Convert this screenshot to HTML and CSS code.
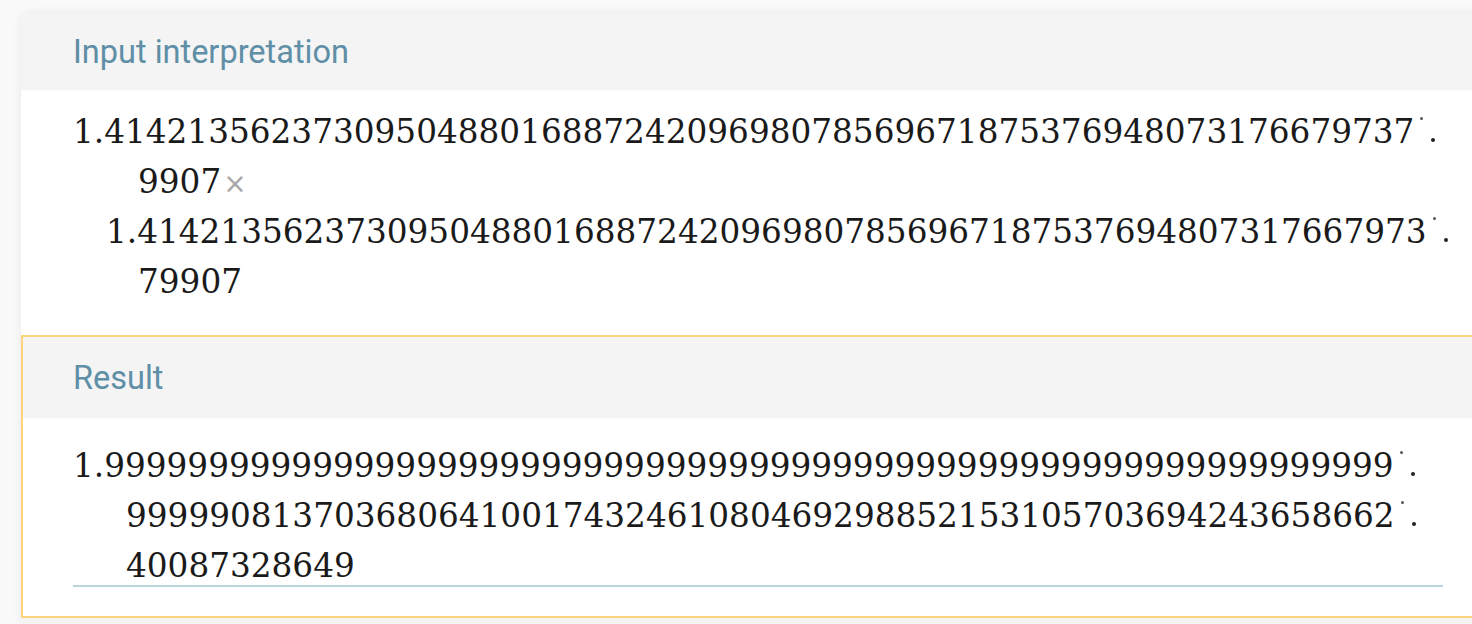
FILE: index.html
```html
<!DOCTYPE html>
<html lang="en">
<head>
<meta charset="utf-8">
<title>Input interpretation</title>
<link rel="stylesheet" href="styles.css">
</head>
<body>
<div class="card">
  <section class="pod">
    <header class="pod-head"><h2 class="pod-title">Input interpretation</h2></header>
    <div class="pod-body pod-body-input">
      <div class="ln">1.414213562373095048801688724209698078569671875376948073176679737<span class="brk"><span class="dot-up"></span><span class="dot-dn"></span></span></div>
      <div class="ln ind2">9907<span class="times">×</span></div>
      <div class="ln ind1">1.41421356237309504880168872420969807856967187537694807317667973<span class="brk"><span class="dot-up"></span><span class="dot-dn"></span></span></div>
      <div class="ln ind2">79907</div>
    </div>
  </section>
  <section class="pod pod-result">
    <header class="pod-head pod-head-result"><h2 class="pod-title">Result</h2></header>
    <div class="pod-body pod-body-result">
      <div class="result-lines">
        <div class="ln">1.99999999999999999999999999999999999999999999999999999999999999<span class="brk"><span class="dot-up"></span><span class="dot-dn"></span></span></div>
        <div class="ln ind3">9999908137036806410017432461080469298852153105703694243658662<span class="brk"><span class="dot-up"></span><span class="dot-dn"></span></span></div>
        <div class="ln ind3">40087328649</div>
      </div>
    </div>
  </section>
  <div class="pod-next"></div>
</div>
</body>
</html>
```

FILE: styles.css
```css
html, body {
  margin: 0;
  padding: 0;
  overflow: hidden;
  background: #f9f9f9;
  height: 624px;
}

.card {
  margin: 13px 0 0 21px;
  width: 1500px;
  background: #ffffff;
  border-radius: 10px 10px 0 0;
  box-shadow: 0 0 10px rgba(0, 0, 0, 0.07);
}

.pod-head {
  background: #f4f4f4;
  height: 77px;
  padding: 2px 50px 0 52px;
  box-sizing: border-box;
  border-radius: 10px 10px 0 0;
}

.pod-title {
  margin: 0;
  font-family: Roboto, "Liberation Sans", sans-serif;
  font-weight: 400;
  font-size: 32.5px;
  line-height: 75px;
  color: #5f8fa6;
}

.pod-body {
  font-family: "DejaVu Serif", serif;
  font-size: 32.7px;
  line-height: 50px;
  color: #1a1a1a;
  white-space: nowrap;
}

.pod-body-input {
  padding: 17px 0 28px 52px;
  height: 245px;
  box-sizing: border-box;
}

.ln {
  height: 50px;
}

.ind1 { padding-left: 33px; }
.ind2 { padding-left: 65px; }
.ind3 { padding-left: 53px; }

.times {
  font-family: "DejaVu Sans", sans-serif;
  color: #a8a8a8;
  font-size: 28px;
  margin-left: 2px;
}

.brk {
  display: inline-block;
  position: relative;
  width: 22px;
  height: 30px;
  vertical-align: baseline;
}

.dot-up {
  position: absolute;
  left: 6px;
  top: 4px;
  width: 3px;
  height: 3px;
  border-radius: 50%;
  background: #555555;
}

.dot-dn {
  position: absolute;
  left: 17px;
  bottom: 1px;
  width: 4px;
  height: 4px;
  border-radius: 50%;
  background: #222222;
}

.pod-result {
  border: 2px solid #fdd47c;
  border-right: none;
}

.pod-head-result {
  height: 81px;
  border-radius: 0;
  padding-left: 50px;
}

.pod-head-result .pod-title {
  line-height: 79px;
}

.pod-body-result {
  padding: 23px 0 29px 50px;
}

.result-lines {
  height: 144px;
  width: 1370px;
  border-bottom: 2px solid #b8d4dd;
}

.pod-next {
  background: #f4f4f4;
  height: 6px;
}
```
